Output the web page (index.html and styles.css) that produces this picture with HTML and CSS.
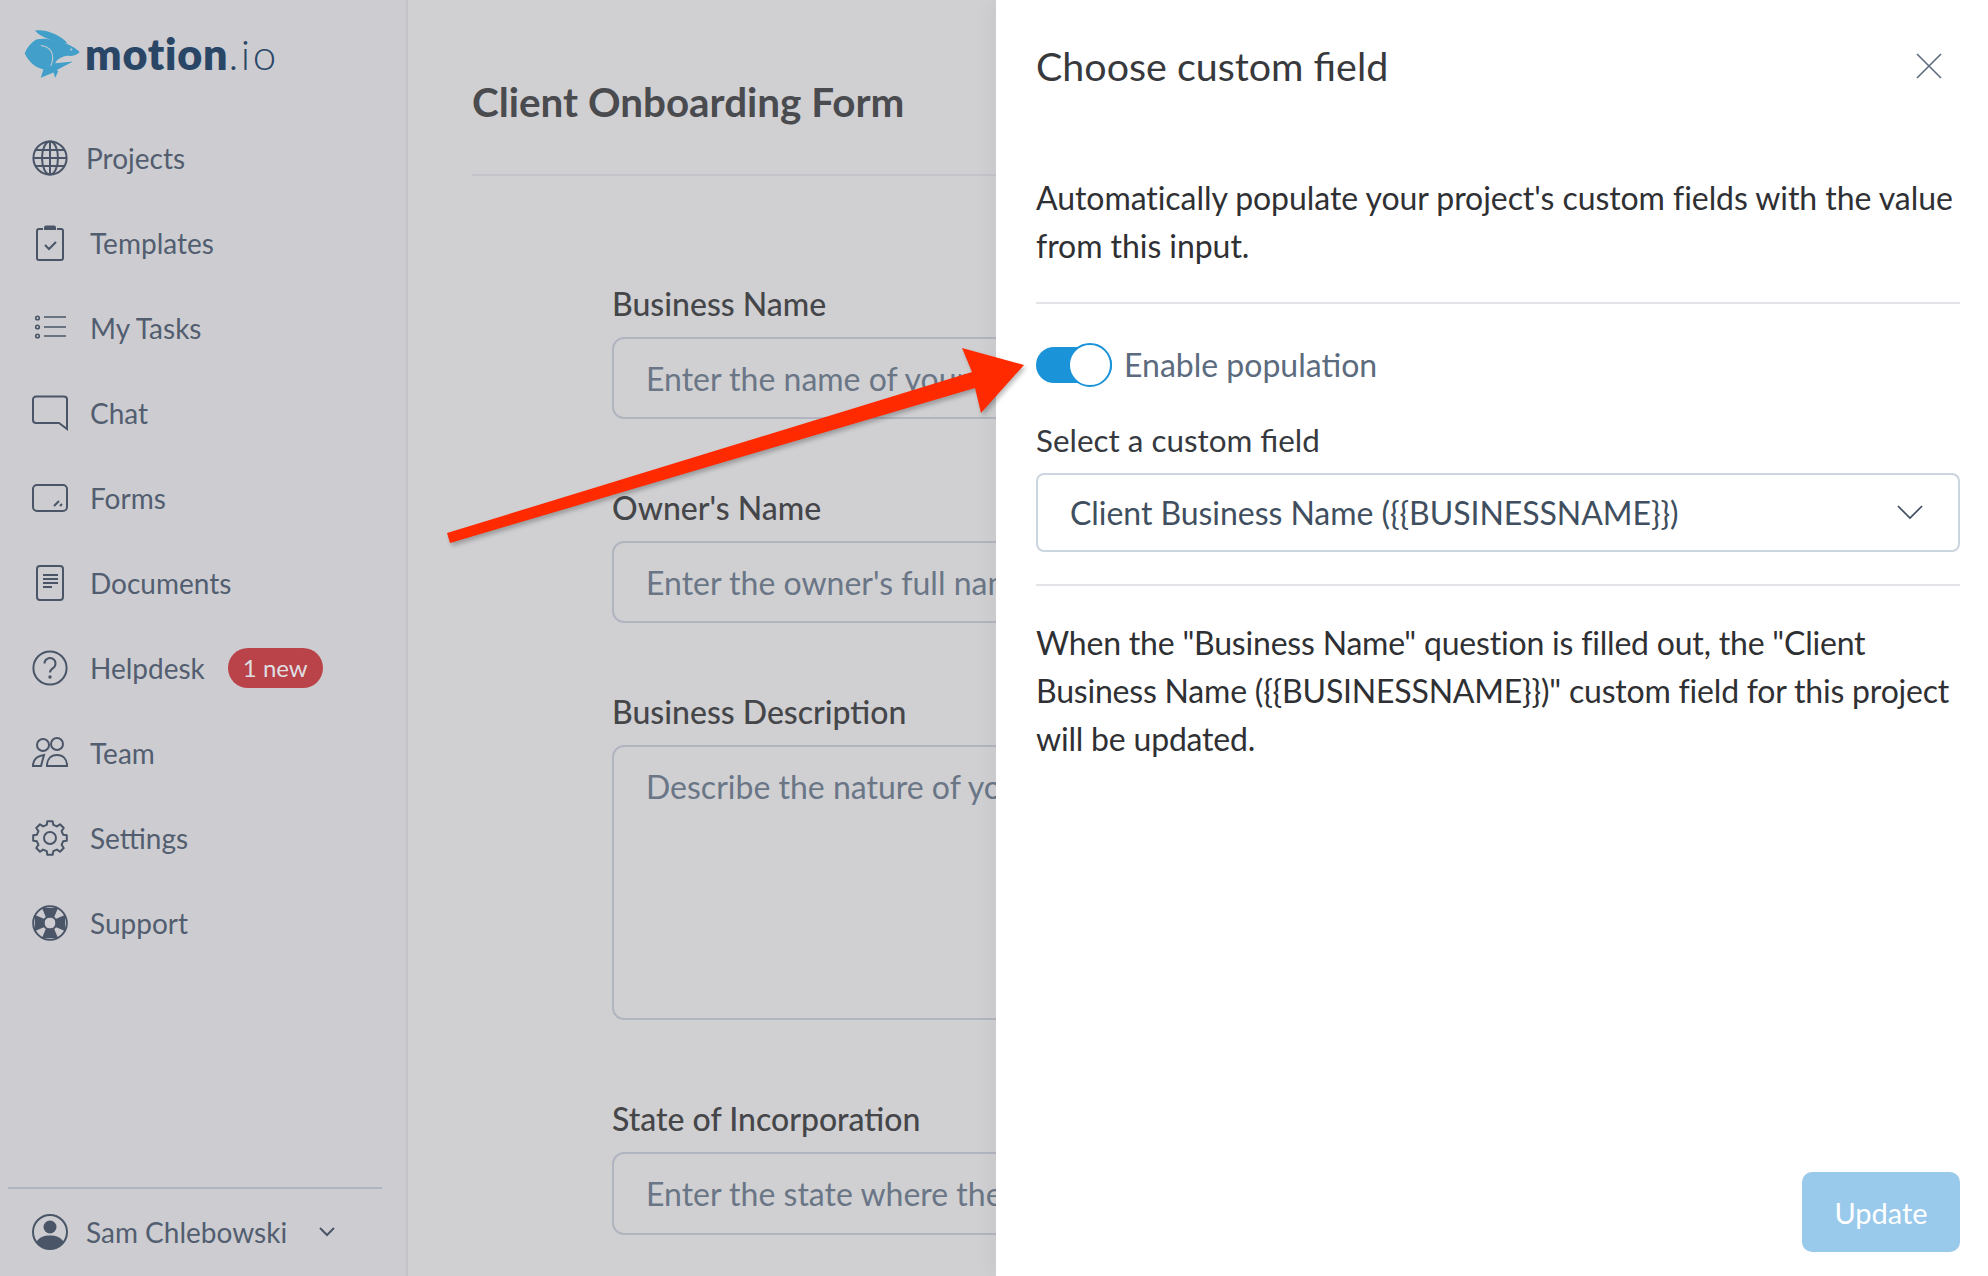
FILE: index.html
```html
<!DOCTYPE html>
<html lang="en">
<head>
<meta charset="utf-8">
<title>Choose custom field</title>
<link rel="stylesheet" href="styles.css">
</head>
<body>
<div class="app">
  <aside class="sidebar">
    <div class="logo">
      <svg class="logo-mark" viewBox="70 55 170 155" aria-hidden="true">
        <path class="rabbit" d="M103 63C130 58 175 72 200 101C170 97 125 88 103 63Z"/>
        <path class="rabbit" d="M72 130C78 115 90 100 105 90C130 82 165 92 190 100C205 105 225 115 236 127C228 135 215 140 200 138C185 140 170 146 163 160L216 155L168 180L172 184L163 204L158 188L120 203L128 178C110 175 85 160 72 130Z"/>
        <path class="rabbit-line" d="M120 107C148 110 165 132 150 168"/>
        <circle class="rabbit-eye" cx="211" cy="119" r="3"/>
      </svg>
      <span class="logo-word">motion</span><span class="logo-ext">.io</span>
    </div>
    <nav class="nav">
      <a class="nav-item nav-item--tight">
        <svg class="icon" viewBox="0 0 36 36"><circle cx="18" cy="18" r="16.6"/><ellipse cx="18" cy="18" rx="8" ry="16.6"/><path d="M18 1.4V34.600M1.400 18H34.600M3.500 10H32.500M3.500 26H32.500"/></svg>
        <span>Projects</span>
      </a>
      <a class="nav-item">
        <svg class="icon" viewBox="0 0 36 36"><path d="M11 4H7a2 2 0 0 0-2 2v27a2 2 0 0 0 2 2h22a2 2 0 0 0 2-2V6a2 2 0 0 0-2-2h-4"/><path class="solid" d="M12 2.500Q12 .5 14 .5H22Q24 .5 24 2.500V5H12Z"/><path d="M13 20l4 4 7-7"/></svg>
        <span>Templates</span>
      </a>
      <a class="nav-item">
        <svg class="icon icon--thin" viewBox="0 0 36 36"><circle cx="5.500" cy="8" r="1.800"/><circle cx="5.500" cy="17" r="1.800"/><circle cx="5.500" cy="26" r="1.800"/><path d="M12 7H34M12 17H34M12 26H34"/></svg>
        <span>My Tasks</span>
      </a>
      <a class="nav-item">
        <svg class="icon" viewBox="0 0 36 36"><path d="M4 1.500H32a3 3 0 0 1 3 3V34L27 28H4a3 3 0 0 1-3-3V4.500a3 3 0 0 1 3-3Z"/></svg>
        <span>Chat</span>
      </a>
      <a class="nav-item">
        <svg class="icon" viewBox="0 0 36 36"><rect x="1" y="5" width="34" height="26" rx="4"/><path d="M22 26l5-5M28 26l2-2"/></svg>
        <span>Forms</span>
      </a>
      <a class="nav-item">
        <svg class="icon" viewBox="0 0 36 36"><rect x="5" y="1" width="26" height="34" rx="3"/><path d="M11 10H26M11 14H26M11 18H26M11 22H20"/></svg>
        <span>Documents</span>
      </a>
      <a class="nav-item">
        <svg class="icon" viewBox="0 0 36 36"><circle cx="18" cy="18" r="16.600"/><path d="M12.500 13.500a5.500 5.500 0 1 1 8.500 4.600c-2 1.300-3 2.400-3 4.400"/><circle class="solid" cx="18" cy="27" r="1.700"/></svg>
        <span>Helpdesk</span>
        <span class="badge">1 new</span>
      </a>
      <a class="nav-item">
        <svg class="icon" viewBox="0 0 36 36"><circle cx="11" cy="10" r="6"/><circle cx="25" cy="9" r="6"/><path d="M1 31C1 25 4 21 12 20L9 31ZM15 31C15 24 19 20 25 20C31 20 35 24 35 31Z"/></svg>
        <span>Team</span>
      </a>
      <a class="nav-item">
        <svg class="icon icon--round" viewBox="0 0 36 36"><circle cx="18" cy="18" r="6"/><polygon points="14.730,4.900 15.340,1.200 20.660,1.200 21.270,4.900 24.950,6.430 28,4.250 31.750,8 29.570,11.050 31.100,14.730 34.800,15.340 34.800,20.660 31.100,21.270 29.570,24.950 31.750,28 28,31.750 24.950,29.570 21.270,31.100 20.660,34.800 15.340,34.800 14.730,31.100 11.050,29.570 8,31.750 4.250,28 6.430,24.950 4.900,21.270 1.200,20.660 1.200,15.340 4.900,14.730 6.430,11.050 4.250,8 8,4.250 11.050,6.430"/></svg>
        <span>Settings</span>
      </a>
      <a class="nav-item">
        <svg class="icon" viewBox="0 0 36 36"><circle cx="18" cy="18" r="16.800"/><circle cx="18" cy="18" r="6.500"/><path class="solid" d="M10 3H26L22 12.500H14ZM10 33H26L22 23.500H14ZM3 10V26L12.500 22V14ZM33 10V26L23.500 22V14Z"/></svg>
        <span>Support</span>
      </a>
    </nav>
    <div class="user">
      <svg class="icon" viewBox="0 0 36 36"><circle cx="18" cy="18" r="17"/><circle class="solid" cx="18" cy="13" r="6.500"/><path class="solid" d="M4.500 28C7 23 12 21.500 18 21.500S29 23 31.500 28C28 32.500 23.500 34.500 18 34.500S8 32.500 4.500 28Z"/></svg>
      <span class="user-name">Sam Chlebowski</span>
      <svg class="user-chevron" viewBox="0 0 16 10"><path d="M1 1l7 7 7-7"/></svg>
    </div>
  </aside>

  <main class="main">
    <h1 class="form-title">Client Onboarding Form</h1>
    <div class="form">
      <label class="field-label">Business Name</label>
      <div class="field-input">Enter the name of your business</div>
      <label class="field-label">Owner's Name</label>
      <div class="field-input">Enter the owner's full name</div>
      <label class="field-label">Business Description</label>
      <div class="field-input field-input--area">Describe the nature of your business</div>
      <label class="field-label field-label--far">State of Incorporation</label>
      <div class="field-input field-input--tall">Enter the state where the business is registered</div>
    </div>
  </main>

  <section class="panel">
    <header class="panel-head">
      <h2 class="panel-title">Choose custom field</h2>
      <svg class="close" viewBox="0 0 26 26"><path d="M1 1l24 24M25 1L1 25"/></svg>
    </header>
    <p class="panel-text panel-intro">Automatically populate your project's custom fields with the value from this input.</p>
    <div class="toggle-row">
      <span class="toggle"><span class="toggle-knob"></span></span>
      <span class="toggle-label">Enable population</span>
    </div>
    <div class="select-label">Select a custom field</div>
    <div class="select">
      <span>Client Business Name ({{BUSINESSNAME}})</span>
      <svg class="select-chevron" viewBox="0 0 28 16"><path d="M1 1l13 13L27 1"/></svg>
    </div>
    <p class="panel-text panel-result">When the "Business Name" question is filled out, the "Client Business Name ({{BUSINESSNAME}})" custom field for this project will be updated.</p>
    <div class="panel-foot"><button class="update">Update</button></div>
  </section>

  <svg class="arrow" viewBox="0 0 1988 1276" aria-hidden="true">
    <polygon points="447,533 450,543 975,388 981,413 1024,365 962,348 972,372"/>
  </svg>
</div>
</body>
</html>
```
FILE: styles.css
```css
* { box-sizing: border-box; }
html, body { margin: 0; height: 100%; }
body { font-family: "Lato", "Liberation Sans", sans-serif; background: #fff; overflow: hidden; }
.app { position: relative; display: flex; width: 1988px; height: 1276px; overflow: hidden; }

.sidebar { width: 408px; flex: none; display: flex; flex-direction: column; background: #cdcdd1; border-right: 2px solid #c3c4ca; }
.logo { display: flex; align-items: baseline; height: 115px; padding: 28px 0 0 24px; color: #2a4666; }
.logo-mark { width: 57px; height: 52px; flex: none; align-self: flex-start; margin-right: 4px; }
.rabbit { fill: #429fca; }
.rabbit-line { fill: none; stroke: #cdcdd1; stroke-width: 3; }
.rabbit-eye { fill: #cdcdd1; }
.logo-word { font-size: 43px; font-weight: 800; line-height: 52px; letter-spacing: .8px; }
.logo-ext { font-size: 42px; font-weight: 300; line-height: 52px; letter-spacing: 2.6px; }

.nav { display: flex; flex-direction: column; }
.nav-item { height: 85px; display: flex; align-items: center; padding-left: 32px; gap: 22px; font-size: 28px; color: #525e70; }
.nav-item--tight { gap: 18px; }
.icon { width: 36px; height: 36px; flex: none; fill: none; stroke: #4a5568; stroke-width: 2; }
.icon--thin { stroke-width: 1.600; }
.icon--round { stroke-linejoin: round; }
.icon .solid { fill: #4a5568; stroke: none; }
.badge { margin-left: 1px; height: 40px; padding: 0 15px; display: flex; align-items: center; border-radius: 20px; background: #b94348; color: #dfdfe2; font-size: 24px; }

.user { margin: auto 24px 0 8px; height: 89px; border-top: 2px solid #b0b4bc; padding: 0 0 2px 24px; display: flex; align-items: center; color: #525e70; font-size: 28px; }
.user-name { margin-left: 18px; }
.user-chevron { width: 16px; height: 10px; margin-left: 32px; fill: none; stroke: #4a5568; stroke-width: 2; }

.main { flex: 1; min-width: 0; overflow: hidden; background: #d0d0d3; padding: 0 0 0 64px; }
.form-title { margin: 0; height: 176px; padding-top: 78px; border-bottom: 2px solid #c4c5ca; font-size: 40.400px; line-height: 48px; font-weight: 700; color: #4a4b4f; white-space: nowrap; }
.form { padding: 0 0 0 140px; display: flex; flex-direction: column; width: 1000px; }
.field-label { font-size: 32px; line-height: 38px; font-weight: 500; color: #454649; margin-top: 70px; margin-bottom: 14px; }
.field-label:first-child { margin-top: 109px; }
.field-label--far { margin-top: 80px; }
.field-input { height: 82px; border: 2px solid #b0b5c0; border-radius: 12px; padding: 0 32px; display: flex; align-items: center; font-size: 32px; color: #6a7686; white-space: nowrap; }
.field-input--area { height: 275px; align-items: flex-start; padding-top: 20px; }
.field-input--tall { height: 83px; }

.panel { width: 992px; flex: none; background: #fff; padding: 0 28px 24px 40px; display: flex; flex-direction: column; box-shadow: -8px 0 16px rgba(0,0,0,.03); position: relative; }
.panel-head { height: 134px; display: flex; align-items: center; justify-content: space-between; padding: 0 18px 3px 0; }
.panel-title { margin: 0; font-size: 39.400px; font-weight: 400; color: #38393c; }
.close { width: 26px; height: 26px; fill: none; stroke: #5b6a7c; stroke-width: 1.600; }
.panel-text { margin: 0; font-size: 32px; line-height: 48px; color: #2f3033; }
.panel-intro { padding: 40px 0 0; height: 170px; border-bottom: 2px solid #e2e4e8; letter-spacing: -.06px; }
.toggle-row { display: flex; align-items: center; height: 84px; margin-top: 19px; gap: 12px; }
.toggle { position: relative; display: block; width: 76px; height: 36px; border-radius: 18px; background: #1b93d8; }
.toggle-knob { position: absolute; right: 0; top: -4px; width: 44px; height: 44px; border-radius: 50%; background: #fff; border: 2px solid #1b93d8; }
.toggle-label { font-size: 32px; color: #5c6b7e; padding-bottom: 2px; }
.select-label { font-size: 31.400px; line-height: 40px; color: #36393e; margin-top: 13px; margin-bottom: 13px; }
.select { height: 79px; border: 2px solid #cbd5e0; border-radius: 8px; padding: 0 35px 0 32px; display: flex; align-items: center; justify-content: space-between; font-size: 32px; letter-spacing: -.05px; color: #3f4f60; }
.select-chevron { width: 26px; height: 15px; fill: none; stroke: #3f4f60; stroke-width: 1.800; }
.panel-result { margin-top: 32px; padding-top: 33px; border-top: 2px solid #e2e4e8; letter-spacing: -.2px; }
.panel-foot { margin-top: auto; display: flex; justify-content: flex-end; }
.update { width: 158px; height: 80px; border: 0; border-radius: 10px; background: #99c9eb; color: #fff; font: 400 29px "Lato", "Liberation Sans", sans-serif; }

.arrow { position: absolute; inset: 0; width: 1988px; height: 1276px; pointer-events: none; }
.arrow polygon { fill: #ff2a00; filter: drop-shadow(2px 3px 2px rgba(0,0,0,.25)); }
```
